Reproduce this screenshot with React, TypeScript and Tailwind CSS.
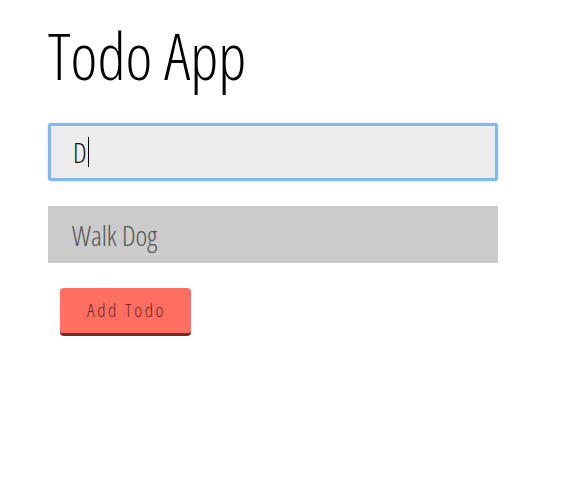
export default function App() {
  return (
    <div className="min-h-screen bg-white font-['Open_Sans',sans-serif] font-light [font-stretch:75%]">
      <div className="flex w-[498px] flex-col pt-[19px] pl-12">
        <h1 className="text-[64px] leading-[74px] text-black">Todo App</h1>
        <div className="mt-[30px] flex h-[58px] items-center rounded-[3px] border-[3px] border-[#85b8f0] bg-[#ececec] pl-[22px] shadow-[0_0_2px_#a9cdf5]">
          <span className="text-[28px] text-[#111]">D</span>
          <span className="ml-px h-[30px] w-px bg-black" />
        </div>
        <div className="mt-[25px] flex h-[57px] items-center bg-[#cbcbcb] pl-6">
          <span className="text-[28px] text-[#555]">Walk Dog</span>
        </div>
        <div className="mt-[25px] pl-3">
          <button className="h-12 w-[131px] rounded-[4px] border-b-[3px] border-[#7a2a24] bg-[#fe6f61] pl-[2px] text-[19px] tracking-[2.5px] text-[#6e2520]">
            Add Todo
          </button>
        </div>
      </div>
    </div>
  );
}
